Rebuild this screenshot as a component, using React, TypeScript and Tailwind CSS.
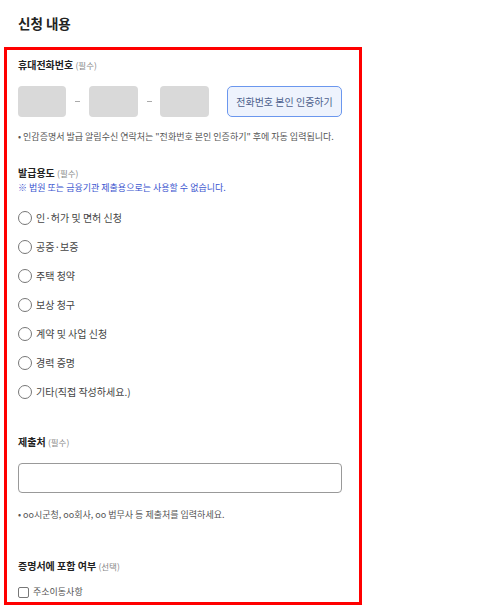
import React from 'react';

const purposes = [
  '인·허가 및 면허 신청',
  '공증·보증',
  '주택 청약',
  '보상 청구',
  '계약 및 사업 신청',
  '경력 증명',
  '기타(직접 작성하세요.)',
];

const Label: React.FC<{ title: string; sub: string; className?: string }> = ({ title, sub, className }) => (
  <div className={`h-[16px] leading-[16px] text-[10px] font-bold text-[#222] ${className ?? ''}`}>
    {title} <span className="text-[8.5px] font-normal text-[#888]">{sub}</span>
  </div>
);

const Dash: React.FC<{ w: string }> = ({ w }) => (
  <div className={`${w} flex justify-center`}>
    <span className="w-[5px] h-[1.5px] bg-[#aaa]" />
  </div>
);

const App: React.FC = () => {
  return (
    <div className="w-[500px] h-[610px] bg-white font-['Noto_Sans_CJK_KR','Noto_Sans',sans-serif]">
      <div className="pt-[14px] pl-[18px] h-[47px] leading-[18px] text-[13.5px] font-bold text-[#222]">신청 내용</div>

      <div className="ml-[4px] w-[358px] h-[558px] border-[3px] border-[#ff0000] overflow-hidden pl-[11px] pr-[17px]">
        <Label title="휴대전화번호" sub="(필수)" className="mt-[7px]" />

        <div className="mt-[13px] flex items-center h-[31px]">
          <div className="w-[48px] h-[31px] rounded-[4px] bg-[#d9d9d9]" />
          <Dash w="w-[23px]" />
          <div className="w-[49px] h-[31px] rounded-[4px] bg-[#d9d9d9]" />
          <Dash w="w-[22px]" />
          <div className="w-[49px] h-[31px] rounded-[4px] bg-[#d9d9d9]" />
          <button className="ml-[18px] w-[115px] h-[31px] rounded-[5px] border border-[#6b97ee] bg-[#eef3fd] text-[10px] text-[#4d5f8c]">
            전화번호 본인 인증하기
          </button>
        </div>

        <p className="mt-[13px] h-[14px] leading-[14px] text-[9px] text-[#555]">
          • 인감증명서 발급 알림수신 연락처는 "전화번호 본인 인증하기" 후에 자동 입력됩니다.
        </p>

        <Label title="발급용도" sub="(필수)" className="mt-[21px]" />
        <p className="h-[14px] leading-[14px] text-[9px] text-[#3b55cf]">※ 법원 또는 금융기관 제출용으로는 사용할 수 없습니다.</p>

        <div className="mt-[8px] flex flex-col">
          {purposes.map((p) => (
            <label key={p} className="h-[29px] flex items-center gap-[4px]">
              <span className="w-[14px] h-[14px] rounded-full border-[1.5px] border-[#777] bg-white" />
              <span className="text-[10px] text-[#444]">{p}</span>
            </label>
          ))}
        </div>

        <Label title="제출처" sub="(필수)" className="mt-[28px]" />
        <div className="mt-[13px] h-[30px] rounded-[4px] border border-[#999] bg-white" />
        <p className="mt-[15px] h-[14px] leading-[14px] text-[9px] text-[#555]">
          • oo시군청, oo회사, oo 법무사 등 제출처를 입력하세요.
        </p>

        <Label title="증명서에 포함 여부" sub="(선택)" className="mt-[36px]" />
        <label className="mt-[11px] h-[14px] flex items-center gap-[4px]">
          <span className="w-[11px] h-[11px] rounded-[2px] border border-[#777] bg-white" />
          <span className="text-[9px] text-[#555]">주소이동사항</span>
        </label>
      </div>
    </div>
  );
};

export default App;
